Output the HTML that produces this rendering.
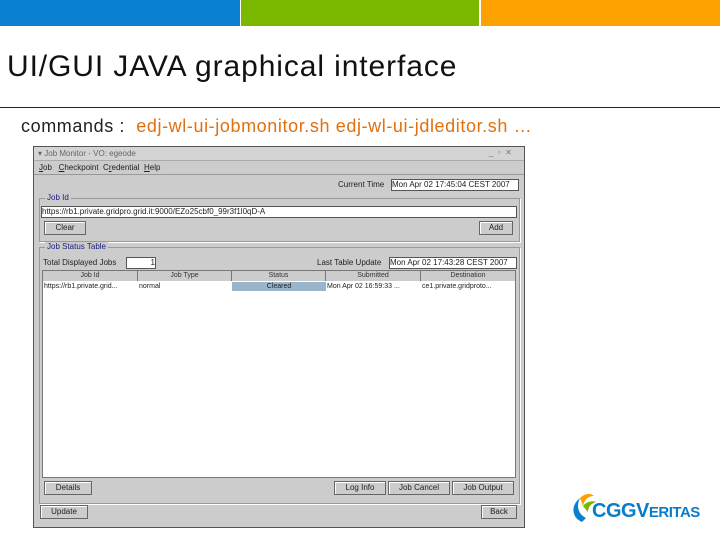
<!DOCTYPE html>
<html><head><style>
body{margin:0;width:720px;height:540px;background:#fff;position:relative;overflow:hidden;font-family:"Liberation Sans",sans-serif}
.a{position:absolute}
.t{font-size:8px;color:#222;white-space:nowrap}
.btn{position:absolute;background:#ccc;border:1px solid #666;box-shadow:inset 1px 1px 0 #fff;font-size:8px;text-align:center;line-height:12px;height:12px;color:#222}
.fld{position:absolute;background:#fff;border:1px solid #555;font-size:8px;line-height:10px;height:10px;white-space:nowrap;overflow:hidden;color:#222}
.grp{position:absolute;border:1px solid #999;box-shadow:1px 1px 0 #fff}
.gl{position:absolute;background:#ccc;font-size:8px;color:#1a1a80;padding:0 2px;top:-6px;left:5px}
.hd{position:absolute;top:0;height:10px;background:#ccc;border-right:1px solid #777;font-size:7px;text-align:center;line-height:10px;color:#333}
.cell{position:absolute;top:11px;height:9px;font-size:7px;line-height:9px;white-space:nowrap;overflow:hidden;color:#222}
</style></head><body>
<div class="a" style="left:0;top:0;width:240px;height:26px;background:#0a80d0"></div>
<div class="a" style="left:241px;top:0;width:238px;height:26px;background:#7ab800"></div>
<div class="a" style="left:481px;top:0;width:239px;height:26px;background:#fca100"></div>
<div class="a" style="left:7px;top:49px;font-size:30px;line-height:36px;color:#111;white-space:nowrap;letter-spacing:0.9px">UI/GUI JAVA graphical interface</div>
<div class="a" style="left:0;top:107px;width:720px;height:1px;background:#222"></div>
<div class="a" style="left:21px;top:115px;font-size:18px;line-height:22px;color:#222;white-space:nowrap;letter-spacing:0.6px">commands : &nbsp;<span style="color:#e07010">edj-wl-ui-jobmonitor.sh edj-wl-ui-jdleditor.sh …</span></div>

<div class="a" style="left:33px;top:146px;width:490px;height:380px;background:#ccc;border:1px solid #555">
 <div class="a" style="left:0;top:0;width:490px;height:13px;background:#d4d4d4;border-bottom:1px solid #aaa"></div>
 <div class="a t" style="left:4px;top:2px;color:#666">▾ Job Monitor - VO: egeode</div>
 <div class="a t" style="left:455px;top:1px;color:#777">_ &nbsp;▫ &nbsp;✕</div>
 <div class="a t" style="left:5px;top:16px"><u>J</u>ob &nbsp; <u>C</u>heckpoint &nbsp;C<u>r</u>edential &nbsp;<u>H</u>elp</div>
 <div class="a" style="left:0;top:27px;width:490px;height:1px;background:#999"></div>
 <div class="a t" style="left:304px;top:33px">Current Time</div>
 <div class="fld" style="left:357px;top:32px;width:126px">Mon Apr 02 17:45:04 CEST 2007</div>
 <div class="grp" style="left:5px;top:51px;width:479px;height:42px"><div class="gl">Job Id</div></div>
 <div class="fld" style="left:7px;top:59px;width:474px">https://rb1.private.gridpro.grid.it:9000/EZo25cbf0_99r3f1l0qD-A</div>
 <div class="btn" style="left:10px;top:74px;width:40px">Clear</div>
 <div class="btn" style="left:445px;top:74px;width:32px">Add</div>
 <div class="grp" style="left:5px;top:100px;width:479px;height:255px"><div class="gl">Job Status Table</div></div>
 <div class="a t" style="left:9px;top:111px">Total Displayed Jobs</div>
 <div class="fld" style="left:92px;top:110px;width:28px;text-align:right">1 </div>
 <div class="a t" style="left:283px;top:111px">Last Table Update</div>
 <div class="fld" style="left:355px;top:110px;width:126px">Mon Apr 02 17:43:28 CEST 2007</div>
 <div class="a" style="left:8px;top:123px;width:472px;height:206px;background:#fff;border:1px solid #777">
  <div class="hd" style="left:0;width:94px">Job Id</div>
  <div class="hd" style="left:95px;width:93px">Job Type</div>
  <div class="hd" style="left:189px;width:93px">Status</div>
  <div class="hd" style="left:283px;width:94px">Submitted</div>
  <div class="hd" style="left:378px;width:94px">Destination</div>
  <div class="cell" style="left:1px;width:93px">https://rb1.private.grid...</div>
  <div class="cell" style="left:96px;width:92px">normal</div>
  <div class="cell" style="left:189px;width:94px;background:#9ab4cc;text-align:center">Cleared</div>
  <div class="cell" style="left:284px;width:93px">Mon Apr 02 16:59:33 ...</div>
  <div class="cell" style="left:379px;width:93px">ce1.private.gridproto...</div>
 </div>
 <div class="btn" style="left:10px;top:334px;width:46px">Details</div>
 <div class="btn" style="left:300px;top:334px;width:50px">Log Info</div>
 <div class="btn" style="left:354px;top:334px;width:60px">Job Cancel</div>
 <div class="btn" style="left:418px;top:334px;width:60px">Job Output</div>
 <div class="btn" style="left:6px;top:358px;width:46px">Update</div>
 <div class="btn" style="left:447px;top:358px;width:34px">Back</div>
</div>

<svg class="a" style="left:568px;top:492px" width="40" height="32" viewBox="0 0 40 32">
 <path d="M14 30 C4 26 2 14 12 6 C8 14 10 22 18 26Z" fill="#0a80d0"/>
 <path d="M12 6 C16 2 22 0 26 4 C20 4 16 8 15 14Z" fill="#fca100"/>
 <path d="M15 14 C18 10 24 8 28 10 C22 12 20 16 20 20Z" fill="#7ab800"/>
</svg>
<div class="a" style="left:592px;top:500px;font-size:20px;font-weight:bold;color:#0a7cc8;white-space:nowrap;letter-spacing:-0.5px">CGGV<span style="font-size:15px">ERITAS</span></div>
</body></html>
